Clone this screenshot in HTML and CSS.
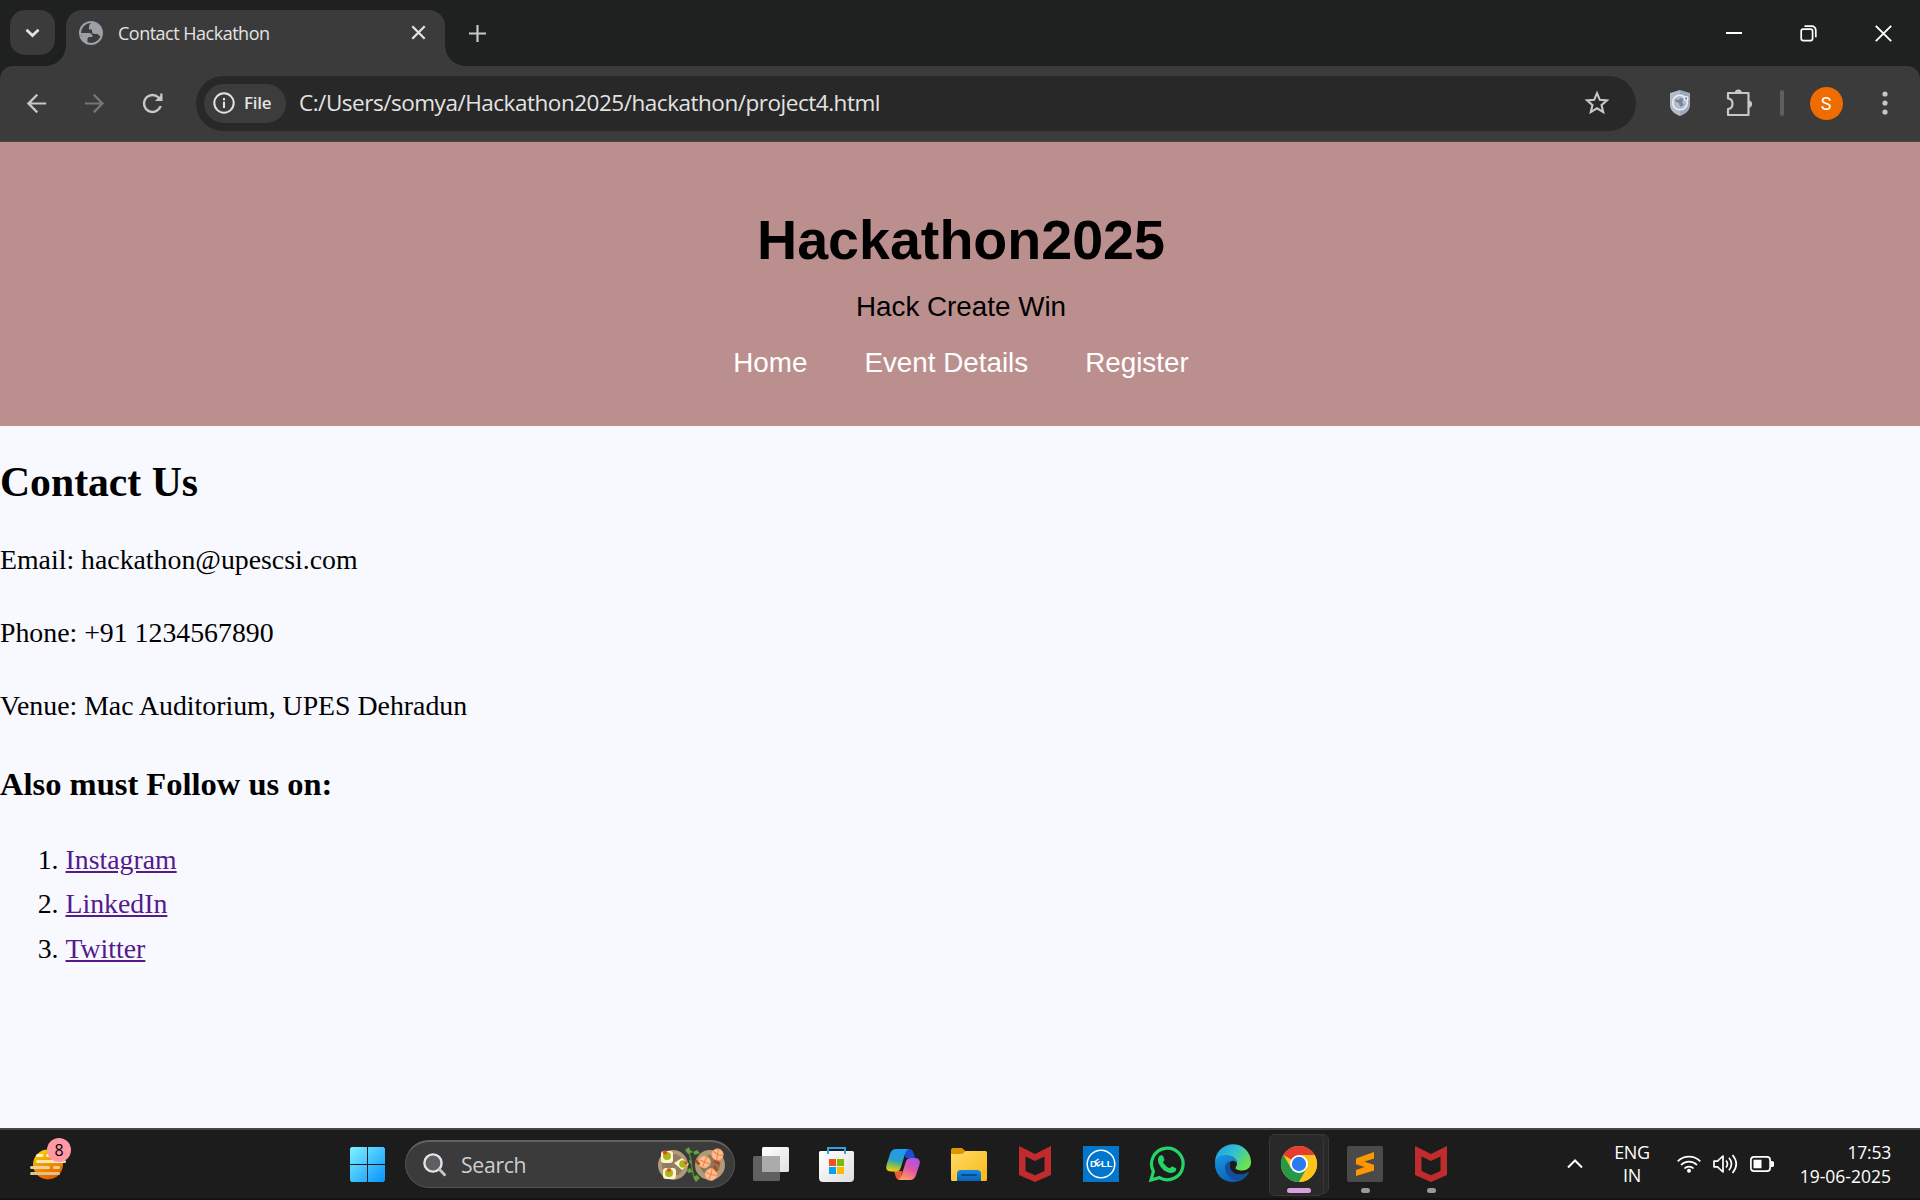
FILE: index.html
```html
<!DOCTYPE html>
<html lang="en">
<head>
<meta charset="utf-8">
<title>Contact Hackathon</title>
<link rel="stylesheet" href="styles.css">
</head>
<body>
<div class="screen">
  <div class="tabstrip">
    <div class="tab-search">
      <svg width="15" height="10" viewBox="0 0 15 10"><path d="M1.5 1.8l6 5.700 6-5.700" fill="none" stroke="#e3e3e3" stroke-width="2.800"/></svg>
    </div>
    <div class="tab">
      <svg class="favicon" width="24" height="24" viewBox="0 0 24 24" fill="#9aa0a6"><circle cx="12" cy="12" r="11" fill="none" stroke="#9aa0a6" stroke-width="2"/><path d="M13 1.500q-3 1.500-3 4v3h3v2q0 2.500 3 2.500h2.500l3.500 3 1-4-2-7-4-3.500z"/><path d="M1.500 12h8q4 0 4 4h-3q-2 0-2 2v4.500L4 20z"/></svg>
      <span class="tab-title">Contact Hackathon</span>
      <svg width="15" height="15" viewBox="0 0 15 15"><path d="M1.300 1.300l12.400 12.400M13.700 1.300L1.300 13.700" stroke="#e3e3e3" stroke-width="2.300"/></svg>
    </div>
    <svg class="new-tab" width="17" height="17" viewBox="0 0 17 17"><path d="M8.500 0v17M0 8.500h17" stroke="#c7c7c7" stroke-width="2.200"/></svg>
    <div class="window-controls">
      <svg width="16" height="16" viewBox="0 0 16 16"><path d="M0 8h16" stroke="#fff" stroke-width="2"/></svg>
      <svg width="17" height="17" viewBox="0 0 17 17" fill="none" stroke="#fff" stroke-width="1.700"><rect x="1.200" y="4.200" width="11.400" height="11.400" rx="2"/><path d="M4.500 1.200h7.300a4 4 0 0 1 4 4v7"/></svg>
      <svg width="17" height="17" viewBox="0 0 17 17"><path d="M.8.8l15.400 15.400M16.200.8L.8 16.200" stroke="#fff" stroke-width="1.900"/></svg>
    </div>
  </div>

  <div class="toolbar">
    <div class="nav-buttons">
      <svg width="29" height="29" viewBox="0 0 24 24"><path fill="#c7c7c7" d="M20 11.100H7.600l5.700-5.700L12 4l-8 8 8 8 1.300-1.400-5.700-5.700H20z"/></svg>
      <svg width="29" height="29" viewBox="0 0 24 24"><path fill="#757575" d="M4 11.100h12.400l-5.700-5.700L12 4l8 8-8 8-1.300-1.400 5.700-5.700H4z"/></svg>
      <svg width="29" height="29" viewBox="0 0 24 24"><path fill="#c7c7c7" d="M17.650 6.350A7.960 7.960 0 0 0 12 4a8 8 0 1 0 7.730 10h-2.080A6 6 0 1 1 12 6c1.660 0 3.140.69 4.220 1.780L14 10h6.300V3.700h-1.900v2z"/></svg>
    </div>
    <div class="omnibox">
      <div class="chip">
        <svg width="22" height="22" viewBox="0 0 22 22"><circle cx="11" cy="11" r="9.700" fill="none" stroke="#e3e3e3" stroke-width="2"/><path d="M11 9.700v6.300M11 6v2.200" stroke="#e3e3e3" stroke-width="2"/></svg>
        <span>File</span>
      </div>
      <span class="url">C:/Users/somya/Hackathon2025/hackathon/project4.html</span>
      <svg class="star" width="26" height="26" viewBox="0 0 26 26"><path d="M13 3.200l2.800 6.600 7.100.6-5.400 4.700 1.700 7-6.200-3.800-6.200 3.800 1.700-7-5.400-4.700 7.100-.6z" fill="none" stroke="#c7c7c7" stroke-width="2.100"/></svg>
    </div>
    <div class="tools">
      <svg width="22" height="28" viewBox="0 0 22 28"><path d="M11 1L1 4v12c0 6 5 9 10 11z" fill="#b4bccb"/><path d="M11 1l10 3v12c0 6-5 9-10 11z" fill="#a0aabd"/><circle cx="11" cy="13.500" r="7.300" fill="#b3bccb" stroke="#edf1f7" stroke-width="1.500"/><path d="M6 10l4 1 1-2 4 1-2 3 2 3-4 2-1-4-3-1z" fill="#78859c"/><circle cx="17" cy="9.500" r="1.900" fill="#8290aa" stroke="#edf1f7" stroke-width="1.200"/></svg>
      <svg width="28" height="28" viewBox="0 0 28 28" stroke-linejoin="round"><path d="M3 5h20.500v22H3v-5.800c6-.8 6-10 0-10.800z" transform="translate(0 -1)" fill="none" stroke="#c7c7c7" stroke-width="2.200"/><path d="M9.700 4a3.600 3.600 0 0 1 7.200 0zM23.500 11.500a3.600 3.600 0 0 1 0 7.200z" fill="#c7c7c7"/></svg>
      <i class="divider"></i>
      <span class="avatar">S</span>
      <svg width="6" height="24" viewBox="0 0 6 24" fill="#c7c7c7"><circle cx="3" cy="3" r="2.600"/><circle cx="3" cy="12" r="2.600"/><circle cx="3" cy="21" r="2.600"/></svg>
    </div>
  </div>

  <main class="page">
    <header class="site-header">
      <h1>Hackathon2025</h1>
      <p>Hack Create Win</p>
      <nav><a>Home</a><a>Event Details</a><a>Register</a></nav>
    </header>
    <section class="contact">
      <h2>Contact Us</h2>
      <p>Email: hackathon@upescsi.com</p>
      <p>Phone: +91 1234567890</p>
      <p>Venue: Mac Auditorium, UPES Dehradun</p>
      <h3>Also must Follow us on:</h3>
      <ol>
        <li><a>Instagram</a></li>
        <li><a>LinkedIn</a></li>
        <li><a>Twitter</a></li>
      </ol>
    </section>
  </main>

  <footer class="taskbar">
    <div class="widgets">
      <svg width="36" height="31" viewBox="0 0 36 31">
        <defs><linearGradient id="sun" x1=".2" y1="0" x2=".6" y2="1"><stop offset="0" stop-color="#ffd000"/><stop offset="1" stop-color="#e65a00"/></linearGradient></defs>
        <circle cx="18" cy="15.500" r="15" fill="url(#sun)"/>
        <g stroke-width="3" stroke-linecap="round"><path d="M7.500 6.500h4.500M17.500 6.500h8" stroke="#fdf0c2"/><path d="M7.500 12.500h27" stroke="#fbe8b8"/><path d="M1.500 18.500h17M24.500 18.500h4" stroke="#ead398"/><path d="M1.500 24.500h27" stroke="#e2c185"/></g>
      </svg>
      <span class="badge">8</span>
    </div>
    <div class="slot">
      <svg width="35" height="35" viewBox="0 0 35 35"><defs><linearGradient id="win" gradientUnits="userSpaceOnUse" x1="0" y1="0" x2="35" y2="35"><stop offset="0" stop-color="#7df3ff"/><stop offset="1" stop-color="#0892ff"/></linearGradient></defs><path fill="url(#win)" d="M1.500 0H17v17H0V1.500zM18 0h15.500L35 1.500V17H18zM0 18h17v17H1.500L0 33.500zM18 18h17v15.500L33.500 35H18z"/></svg>
    </div>
    <div class="search">
      <svg width="24" height="24" viewBox="0 0 24 24"><circle cx="10" cy="10" r="8.600" fill="#5d5f61" stroke="#e2e5e8" stroke-width="2.400"/><path d="M16.300 16.300l5.300 5.500" stroke="#c4c8cb" stroke-width="2.800" stroke-linecap="round"/></svg>
      <span>Search</span>
      <svg class="food" width="70" height="38" viewBox="0 0 70 38">
        <circle cx="16" cy="19" r="15" fill="#b09b79"/><circle cx="16" cy="19" r="11" fill="#917d5f"/>
        <g fill="#fff2cf"><rect x="4" y="5" width="12" height="12" rx="3"/><path d="M17 17l8-5 7 6-7 6z"/><rect x="6" y="22" width="13" height="11" rx="3"/></g>
        <g fill="#a7b817"><circle cx="10" cy="10" r="4"/><circle cx="26" cy="18" r="3.800"/><circle cx="12" cy="27" r="4"/></g>
        <g fill="#e34b22"><circle cx="8" cy="6.500" r="2.200"/><circle cx="29" cy="17" r="1.700"/><circle cx="12" cy="24" r="2"/></g>
        <circle cx="53" cy="19" r="15" fill="#b09b79"/><circle cx="53" cy="19" r="10" fill="#8b775b"/>
        <path d="M31 3q3 9 4 18t4 14" fill="none" stroke="#568b31" stroke-width="1.400"/>
        <g fill="#65a33a"><path d="M28 4l4-3 1 3 3 2-5 2zM36 6l4-2 3 3-5 2zM30 24l3-2 3 4-5 1zM36 31l4-2 3 3-4 4zM32 14l3 1-2 3z"/></g>
        <g fill="#ffbd8c" stroke="#ffab77" stroke-width="1"><circle cx="60.500" cy="8.500" r="5.600"/><circle cx="47.500" cy="16" r="5.800"/><circle cx="54" cy="28.500" r="5.800"/></g>
        <g fill="none" stroke="#e98450" stroke-width="1.100"><path d="M60.500 8.500l-4-3M60.500 8.500l1-5M60.500 8.500l5 1M60.500 8.500l-1 5M47.500 16l-4.500-2M47.500 16l2-5M47.500 16l5 2M47.500 16l-2 5M54 28.500l-4.500-2M54 28.500l1-5M54 28.500l5 1M54 28.500l-2 5"/></g>
        <path d="M38.500 14.500l4 4M57 15l6 3M57 20l3 5" stroke="#b5481b" stroke-width="2.600"/>
      </svg>
    </div>
    <div class="apps">
      <div class="slot"><svg width="36" height="34" viewBox="0 0 36 34"><defs><linearGradient id="tv" x1="0" y1="0" x2="1" y2="1"><stop offset="0" stop-color="#fff"/><stop offset="1" stop-color="#e0e0e0"/></linearGradient></defs><rect x="9" y="0" width="27" height="25" rx="1.500" fill="url(#tv)"/><rect x="0" y="9" width="27" height="25" rx="1.500" fill="#606060"/><path d="M9 9h18v16H9z" fill="#ababab"/></svg></div>
      <div class="slot store"><svg width="35" height="35" viewBox="0 0 35 35"><defs><linearGradient id="bag" x1="0" y1="0" x2="1" y2="1"><stop offset="0" stop-color="#fff"/><stop offset="1" stop-color="#dedede"/></linearGradient></defs><path d="M0 5.500Q0 4 1.500 4h32Q35 4 35 5.500V31q0 4-4 4H4q-4 0-4-4z" fill="url(#bag)"/><path d="M9 7V1h17v6" fill="none" stroke="#2aa4e6" stroke-width="2"/><path fill="#f25022" d="M10 12h7v7h-7z"/><path fill="#7fba00" d="M18 12h7v7h-7z"/><path fill="#00a4ef" d="M10 20h7v7h-7z"/><path fill="#ffb900" d="M18 20h7v7h-7z"/></svg></div>
      <div class="slot"><svg width="34" height="31" viewBox="0 0 34 31"><defs><linearGradient id="cpa" x1=".5" y1="0" x2=".3" y2="1"><stop offset="0" stop-color="#1d9cf0"/><stop offset=".5" stop-color="#2a9fc6"/><stop offset=".8" stop-color="#9fc33a"/><stop offset="1" stop-color="#f3cf14"/></linearGradient><linearGradient id="cpb" x1=".7" y1="0" x2=".3" y2="1"><stop offset="0" stop-color="#a754ee"/><stop offset=".5" stop-color="#e257a0"/><stop offset="1" stop-color="#ff9b62"/></linearGradient></defs><path d="M17 0h5.500q4 0 5 4l1.500 5H20z" fill="#1d4ed1"/><path d="M8 22h8l-1 9h-1q-3.500 0-4.500-4z" fill="#ee5a35"/><path d="M10 0h13q-3 1-4 5l-4 13q-1.200 4.500-5 4.500H5q-6 0-4.500-6.500L4 5q1.500-5 6-5z" fill="url(#cpa)"/><path d="M24 31H12q2.500-1 3.700-5l4-13q1.200-4 5-4H29q6 0 4.500 6.500L30 26q-1.500 5-6 5z" fill="url(#cpb)"/></svg></div>
      <div class="slot"><svg width="36" height="33" viewBox="0 0 36 33"><defs><linearGradient id="fold" x1="0" y1="0" x2="1" y2="1"><stop offset="0" stop-color="#ffdc65"/><stop offset="1" stop-color="#f8b719"/></linearGradient><linearGradient id="fb" x1="0" y1="0" x2="0" y2="1"><stop offset="0" stop-color="#158ae0"/><stop offset="1" stop-color="#0b61b4"/></linearGradient></defs><path d="M0 2q0-2 2-2h9l4 3.500V9H0z" fill="#dc9600"/><path d="M0 6h11l4-3h19.500q1.500 0 1.500 1.500V31.500q0 1.500-1.500 1.500h-33Q0 33 0 31.500z" fill="url(#fold)"/><path d="M6 33v-7q0-4 4-4h16q4 0 4 4v7z" fill="url(#fb)"/><path d="M11 27h14" stroke="#064b91" stroke-width="2" stroke-linecap="round"/></svg></div>
      <div class="slot"><svg width="32" height="36" viewBox="0 0 32 36"><path fill="#c02b2d" fill-rule="evenodd" d="M0 0l16 8 16-8v29l-16 7-16-7zM6.500 10.500V25L16 29.300 25.500 25V10.500L16 15z"/></svg></div>
      <div class="slot"><svg width="36" height="36" viewBox="0 0 36 36"><path fill="#0076ce" d="M0 0h36v36H0z"/><circle cx="18" cy="18" r="13.800" fill="none" stroke="#fff" stroke-width="1.500"/><text class="dell" x="7" y="21.400">D</text><text class="dell" transform="translate(12.600 18.800) rotate(-35)" x="0" y="3">E</text><text class="dell" x="18" y="21.400">LL</text></svg></div>
      <div class="slot"><svg width="36" height="36" viewBox="0 0 36 36"><path d="M2 34l2.400-8.600a15.800 15.800 0 1 1 6 6.200z" fill="none" stroke="#25d366" stroke-width="3.200"/><path fill="#25d366" d="M11.500 9.500c1.200-.7 2.200-.3 2.700 1l1.200 3c.3.900-1.100 2-1.500 2.600 1.600 3 3.800 5 6.800 6.200.8-.5 1.700-2 2.600-1.700l3.300 1.500c1.300.7.500 2.600-.4 3.500-4 3.300-9.500.3-12.400-2.400-3-2.900-6.600-8.700-4-12.400.5-.7 1-1 1.700-1.300z"/></svg></div>
      <div class="slot"><svg width="36" height="36" viewBox="0 0 36 36"><defs><linearGradient id="ea" x1="0" y1="0" x2="1" y2=".6"><stop offset="0" stop-color="#2295df"/><stop offset=".5" stop-color="#32bfd5"/><stop offset="1" stop-color="#6be34b"/></linearGradient><linearGradient id="eb" x1="0" y1="0" x2=".6" y2="1"><stop offset="0" stop-color="#1699e6"/><stop offset="1" stop-color="#105bb0"/></linearGradient></defs><path d="M0 17A18 18 0 0 1 36 15.500c.5 6-4 9-9 9-3.500 0-6.500-1-6.500-2.500 0-1 1.500-1.800 1.500-4.500 0-5-5-8-10-8C5 9.500 1 13 0 17z" fill="url(#ea)"/><path d="M0 18C0 12 5 9 11 9s11 3.500 11 8.500c-2-3.500-7.500-4-7.500 1.500 0 9 10 12 18 7.500 1-.5 1.500 0 .8 1A18 18 0 0 1 18 36C7 36 0 28 0 18z" fill="url(#eb)"/><path d="M10 21c0 10 10 15 16.500 13a18 18 0 0 0 6.800-6.500c.7-1 .2-1.500-.8-1-8 4.500-18 1.500-18-7.500 0-2 .6-3.400 1.500-4.300-3.500.8-6 3.300-6 6.300z" fill="#124f9e"/></svg></div>
      <div class="slot active"><span class="window-stack"></span><svg width="36" height="36" viewBox="0 0 36 36"><circle cx="18" cy="18" r="18" fill="#fdc51c"/><path d="M18 18L2.400 9A18 18 0 0 1 33.600 9H18z" fill="#e43e30"/><path d="M2.400 9A18 18 0 0 0 18 36l7.800-13.500L18 18l-7.800 4.500z" fill="#279847"/><path d="M18 9h15.600A18 18 0 0 1 18 36l7.800-13.500z" fill="#fdc51c"/><circle cx="18" cy="18" r="9" fill="#fff"/><circle cx="18" cy="18" r="7.200" fill="#2b7af0"/></svg></div>
      <div class="slot running"><svg width="36" height="36" viewBox="0 0 36 36"><rect width="36" height="36" rx="2" fill="#4a4a4a"/><path d="M9 13l18 6v5.500L9 18.500z" fill="#e28100"/><path d="M9 12.500L27 6v6.500l-10 3.300L27 19v5.500L9 30v-6l10-3.500-10-3z" fill="#ff9800"/></svg></div>
      <div class="slot running"><svg width="32" height="36" viewBox="0 0 32 36"><path fill="#c02b2d" fill-rule="evenodd" d="M0 0l16 8 16-8v29l-16 7-16-7zM6.500 10.500V25L16 29.300 25.500 25V10.500L16 15z"/></svg></div>
    </div>
    <div class="tray">
      <svg width="16" height="10" viewBox="0 0 16 10"><path d="M1 8.500l7-7 7 7" fill="none" stroke="#fff" stroke-width="2"/></svg>
      <div class="lang"><span>ENG</span><span>IN</span></div>
      <div class="status">
        <svg width="24" height="18" viewBox="0 0 24 18" fill="none" stroke="#fff" stroke-width="1.700"><path d="M.7 6.300a16 16 0 0 1 22.600 0M4 10a11.300 11.300 0 0 1 16 0M7.400 13.500a6.500 6.500 0 0 1 9.200 0"/><circle cx="12" cy="15.800" r="2" fill="#fff" stroke="none"/></svg>
        <svg width="25" height="20" viewBox="0 0 25 20" fill="none" stroke="#fff" stroke-width="1.700"><path d="M1 7.200h3.500L10 2v16l-5.500-5.200H1z" stroke-linejoin="round"/><path d="M13 6.500q3 3.500 0 7M16 3.800q5 6.200 0 12.400M19.500 1q7.500 9 0 18"/></svg>
        <svg width="24" height="16" viewBox="0 0 24 16"><rect x=".9" y=".9" width="19.200" height="14.200" rx="3.200" fill="none" stroke="#fff" stroke-width="1.700"/><path d="M3.500 3.700h8v8.600h-8zM21 5h1q2 0 2 1.500v3Q24 11 22 11h-1z" fill="#fff"/></svg>
      </div>
      <div class="clock"><span>17:53</span><span>19-06-2025</span></div>
    </div>
  </footer>
</div>
</body>
</html>
```
FILE: styles.css
```css
* { box-sizing: border-box; }
body { margin: 0; background: #f8f8ff; overflow: hidden; }
svg { display: block; flex: none; overflow: visible; }
.screen { width: 1920px; height: 1200px; display: flex; flex-direction: column; font-family: "Open Sans", "Noto Sans", sans-serif; background: #1f2120; }

/* tab strip */
.tabstrip { height: 66px; flex: none; display: flex; align-items: flex-start; padding: 10px 0 0 10px; background: #1f2120; }
.tab-search { width: 45px; height: 45px; border-radius: 15px; background: #3b3b3b; display: flex; align-items: center; justify-content: center; }
.tab { position: relative; width: 379px; height: 56px; margin-left: 11px; padding: 0 19px 11px 13px; display: flex; align-items: center; border-radius: 16px 16px 0 0; background: #3b3b3b; }
.tab::before, .tab::after { content: ""; position: absolute; bottom: 0; width: 20px; height: 20px; }
.tab::before { left: -20px; background: radial-gradient(circle at 0 0, transparent 19.5px, #3b3b3b 20px); }
.tab::after { right: -20px; background: radial-gradient(circle at 100% 0, transparent 19.5px, #3b3b3b 20px); }
.tab-title { flex: 1; margin-left: 15px; font-size: 18px; letter-spacing: -0.5px; color: #e3e3e3; white-space: nowrap; }
.new-tab { margin: 15px 0 0 24px; }
.window-controls { display: flex; gap: 58px; margin: 15px 28px 0 auto; }

/* toolbar */
.toolbar { height: 76px; flex: none; display: flex; align-items: center; padding-bottom: 1px; background: #3b3b3b; border-radius: 13px 13px 0 0; border-bottom: 1px solid #484848; }
.nav-buttons { display: flex; gap: 29px; padding: 0 29px 0 22px; }
.omnibox { width: 1440px; height: 55px; padding: 0 26px 0 8px; display: flex; align-items: center; border-radius: 28px; background: #282828; }
.chip { width: 82px; height: 39px; padding: 0 0 1px 9px; display: flex; align-items: center; gap: 9px; border-radius: 20px; background: #3c3c3c; color: #e3e3e3; font-size: 17px; font-weight: 600; letter-spacing: -0.3px; }
.url { flex: 1; margin-left: 13px; padding-bottom: 1px; font-size: 22.500px; letter-spacing: -0.48px; color: #e3e3e3; white-space: nowrap; }
.tools { display: grid; grid-template-columns: 59px 60px 26px 62px 56px; justify-items: center; align-items: center; margin-left: 14px; }
.divider { width: 4px; height: 26px; border-radius: 2px; background: #5f5f5f; }
.avatar { width: 33px; height: 33px; border-radius: 50%; background: #ef6c00; color: #fff; display: flex; align-items: center; justify-content: center; font: 18px Roboto, sans-serif; }

/* page */
.page { flex: 1; min-height: 0; background: #f8f8ff; color: #000; font: 27.800px/44.350px "Liberation Serif", serif; }
.page p, .page h1, .page h2, .page h3, .page ol { margin: 0; }
.site-header { height: 284px; padding: 57px 0 0 2px; background: #bc8f8f; font-family: "Liberation Sans", sans-serif; text-align: center; }
.site-header h1 { font-size: 55.600px; line-height: 83px; }
.site-header p { margin-top: 3px; }
.site-header nav { display: flex; justify-content: center; gap: 57px; margin-top: 11.600px; color: #fff; }
.contact { padding-top: 23.400px; }
.contact h2 { font-size: 41.700px; line-height: 66.500px; margin-bottom: 22.600px; }
.contact p { margin-bottom: 28.300px; }
.contact h3 { font-size: 32.520px; line-height: 52px; margin: 29.500px 0 28.400px; }
.contact ol { padding-left: 65.500px; line-height: 44.300px; }
.contact a { color: #551a8b; text-decoration: underline; }

/* taskbar */
.taskbar { height: 72px; flex: none; display: flex; align-items: center; background: #1c1c1c; border-top: 2px solid #454545; border-bottom: 2px solid #180f12; color: #fff; }
.widgets { position: relative; width: 334px; padding-left: 30px; }
.badge { position: absolute; left: 47px; top: -11px; width: 24px; height: 24px; border-radius: 50%; background: #ff99a4; color: #000; font-size: 16px; line-height: 24px; text-align: center; }
.slot { position: relative; width: 66px; height: 60px; display: flex; align-items: center; justify-content: center; }
.store { padding-right: 2px; }
.search { width: 330px; height: 48px; margin: 0 3px 0 5px; padding: 0 7px 0 17px; display: flex; align-items: center; border: 1px solid #525252; border-top: 2px solid #626262; border-radius: 24px; background: #3b3b3b; }
.search span { margin-left: 14px; padding-bottom: 1px; font-size: 21.200px; letter-spacing: -0.3px; color: #cfcfcf; }
.food { margin-left: auto; }
.apps { display: flex; }
.active::before, .window-stack { content: ""; position: absolute; top: 0; height: 60px; border: 1px solid #383838; border-radius: 6px; background: #292929; }
.active::before { left: 3px; width: 53px; z-index: 1; }
.window-stack { left: 44px; width: 19px; }
.active svg { z-index: 2; }
.active::after, .running::after { content: ""; position: absolute; bottom: 1px; height: 5px; border-radius: 3px; z-index: 3; }
.active::after { left: 21px; width: 24px; background: #d9a0e0; }
.running::after { left: 29px; width: 9px; background: #999; }
.tray { margin-left: auto; padding-right: 29px; display: flex; align-items: center; }
.lang { width: 60px; margin-left: 19px; display: flex; flex-direction: column; align-items: center; font-size: 18px; line-height: 23px; letter-spacing: -0.3px; }
.status { display: flex; align-items: center; gap: 12px; margin-left: 15px; }
.clock { width: 117px; display: flex; flex-direction: column; align-items: flex-end; font-size: 17.500px; line-height: 24px; letter-spacing: 0; white-space: nowrap; }
.clock span:first-child { letter-spacing: -0.2px; }
.lang, .clock { padding-bottom: 1px; }
.dell { font: bold 9.500px "Liberation Sans", sans-serif; fill: #fff; }
```
